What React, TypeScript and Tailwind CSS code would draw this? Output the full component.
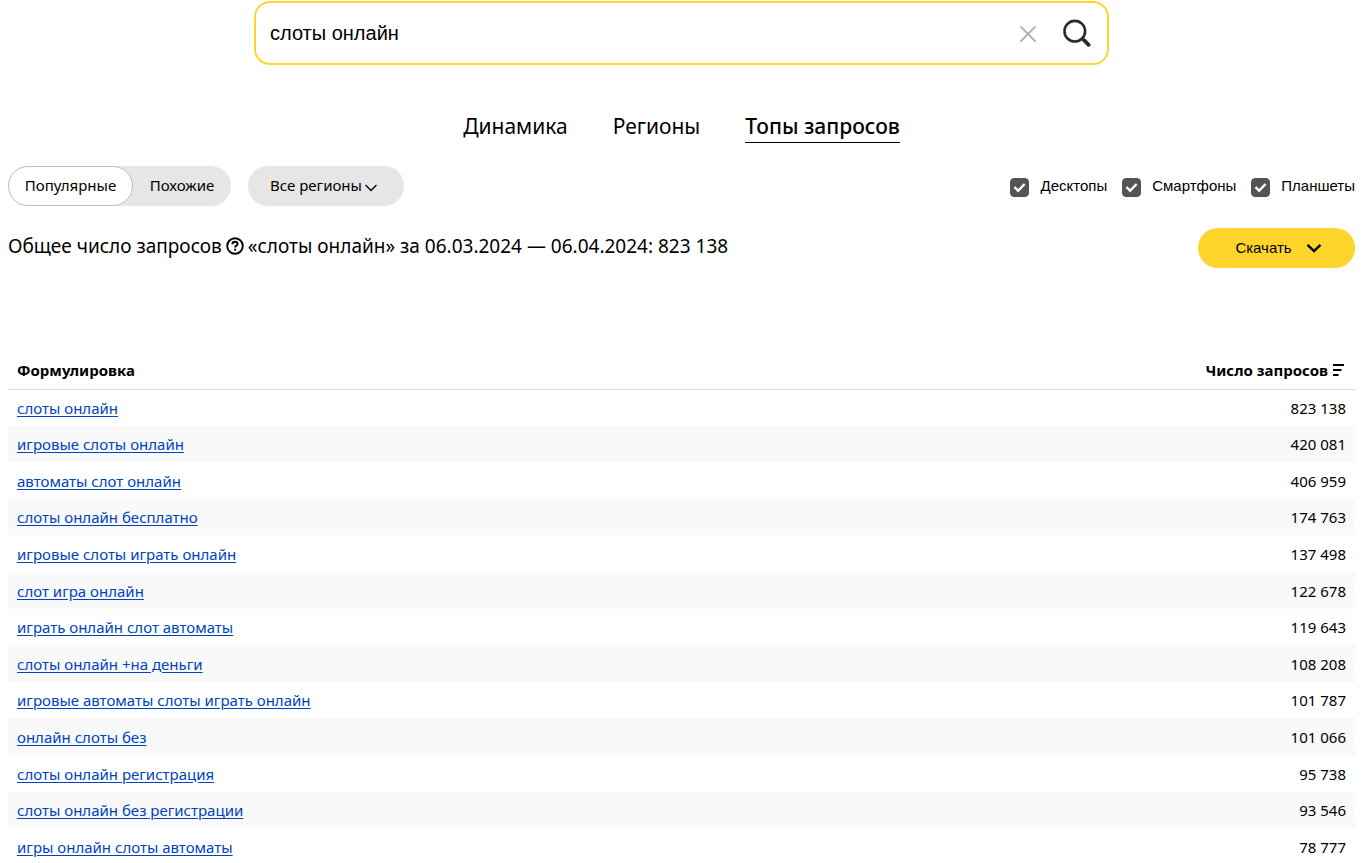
import React, { useState } from 'react';

interface QueryRow {
  phrase: string;
  count: string;
}

const rows: QueryRow[] = [
  { phrase: 'слоты онлайн', count: '823 138' },
  { phrase: 'игровые слоты онлайн', count: '420 081' },
  { phrase: 'автоматы слот онлайн', count: '406 959' },
  { phrase: 'слоты онлайн бесплатно', count: '174 763' },
  { phrase: 'игровые слоты играть онлайн', count: '137 498' },
  { phrase: 'слот игра онлайн', count: '122 678' },
  { phrase: 'играть онлайн слот автоматы', count: '119 643' },
  { phrase: 'слоты онлайн +на деньги', count: '108 208' },
  { phrase: 'игровые автоматы слоты играть онлайн', count: '101 787' },
  { phrase: 'онлайн слоты без', count: '101 066' },
  { phrase: 'слоты онлайн регистрация', count: '95 738' },
  { phrase: 'слоты онлайн без регистрации', count: '93 546' },
  { phrase: 'игры онлайн слоты автоматы', count: '78 777' },
];

const SearchBar: React.FC = () => {
  const [query, setQuery] = useState('слоты онлайн');

  return (
    <form
      onSubmit={(e) => e.preventDefault()}
      className="mx-auto flex h-16 w-full max-w-[855px] items-center rounded-2xl border-2 border-[#ffd42b] bg-white pl-3.5 pr-4"
    >
      <input
        type="text"
        aria-label="Запрос"
        value={query}
        onChange={(e) => setQuery(e.target.value)}
        className="min-w-0 flex-1 font-['Liberation_Sans',Arial,sans-serif] text-[20px] leading-6 outline-none"
      />
      <button type="button" aria-label="Очистить" onClick={() => setQuery('')} className="mr-[26px] pt-0.5">
        <svg width="18" height="18" viewBox="0 0 18 18" fill="none" stroke="#b3b3b3" strokeWidth="2">
          <path d="M1.5 1.5l15 15M16.5 1.5l-15 15" />
        </svg>
      </button>
      <button type="submit" aria-label="Найти">
        <svg width="28" height="28" viewBox="0 0 28 28" fill="none" stroke="#2b2b2f">
          <circle cx="11.8" cy="12.2" r="10.3" strokeWidth="2.6" />
          <path d="M18.8 19.2l2.4 2.4" strokeWidth="2.4" />
          <path d="M21 21.2l4.6 4.6" strokeWidth="3.8" strokeLinecap="round" />
        </svg>
      </button>
    </form>
  );
};

const DeviceCheckbox: React.FC<{ label: string }> = ({ label }) => (
  <label className="flex items-center gap-[11px]">
    <span className="grid h-[19px] w-[19px] place-items-center pt-px">
      <input
        type="checkbox"
        defaultChecked
        className="peer col-start-1 row-start-1 h-[19px] w-[19px] appearance-none rounded border border-[#545454] checked:bg-[#545454]"
      />
      <svg
        className="pointer-events-none invisible col-start-1 row-start-1 peer-checked:visible"
        width="13"
        height="11"
        viewBox="0 0 13 11"
        fill="none"
        stroke="#fff"
        strokeWidth="2.4"
      >
        <path d="M1.5 5l3.6 3.8L11.6 2" />
      </svg>
    </span>
    <span>{label}</span>
  </label>
);

export default function App() {
  const [mode, setMode] = useState('popular');

  return (
    <div className="h-screen overflow-hidden bg-white pl-2 pr-[9px] pt-px font-['Noto_Sans',sans-serif] text-black">
      <SearchBar />

      {/* Tabs */}
      <nav className="mt-[46px] flex justify-center gap-[45px] text-[21px] leading-[30px]">
        <a href="#dynamics" className="border-b border-transparent pb-px">Динамика</a>
        <a href="#regions" className="border-b border-transparent pb-px">Регионы</a>
        <a href="#tops" className="border-b border-black pb-px font-medium">Топы запросов</a>
      </nav>

      {/* Filters */}
      <div className="mt-[23px] flex items-center justify-between">
        <div className="flex gap-[17px] text-[15px] leading-5">
          <div className="flex h-10 rounded-full bg-[#e6e6e6]">
            <button
              onClick={() => setMode('popular')}
              className={`w-[125px] rounded-full border pb-0.5 ${mode === 'popular' ? 'border-[#bfbfbf] bg-white' : 'border-transparent'}`}
            >
              Популярные
            </button>
            <button
              onClick={() => setMode('similar')}
              className={`w-[98px] rounded-full border pb-0.5 ${mode === 'similar' ? 'border-[#bfbfbf] bg-white' : 'border-transparent'}`}
            >
              Похожие
            </button>
          </div>
          <button className="flex h-10 w-[156px] items-center justify-center gap-0.5 rounded-full bg-[#e6e6e6] pb-0.5 pr-1">
            Все регионы
            <svg width="14" height="9" viewBox="0 0 14 9" className="mt-1" fill="none" stroke="#000" strokeWidth="1.3">
              <path d="M1.5 2l5.5 5.5L12.5 2" />
            </svg>
          </button>
        </div>
        <div className="flex gap-[15px] font-['Liberation_Sans',Arial,sans-serif] text-[15px] leading-5">
          <DeviceCheckbox label="Десктопы" />
          <DeviceCheckbox label="Смартфоны" />
          <DeviceCheckbox label="Планшеты" />
        </div>
      </div>

      {/* Total and export */}
      <div className="mt-[22px] flex items-start justify-between">
        <p className="flex items-center gap-1 pt-1 text-[19px] leading-7">
          Общее число запросов
          <svg width="18" height="18" viewBox="0 0 18 18" fill="none" stroke="#000" strokeWidth="1.9">
            <circle cx="9" cy="9" r="7.8" />
            <path d="M6.4 7.2c0-1.6 1.1-2.5 2.6-2.5s2.6.9 2.6 2.2c0 1.8-2.5 1.7-2.5 3.7" />
            <path d="M9.1 11.7v2" />
          </svg>
          «слоты онлайн» за 06.03.2024 — 06.04.2024: 823 138
        </p>
        <button className="flex h-10 w-[157px] items-center justify-center gap-3.5 rounded-full bg-[#ffd42b] pl-1 font-['Liberation_Sans',Arial,sans-serif] text-[15px]">
          Скачать
          <svg width="16" height="10" viewBox="0 0 16 10" fill="none" stroke="#000" strokeWidth="2.4">
            <path d="M1.5 1.8L8 8l6.5-6.2" />
          </svg>
        </button>
      </div>

      <table className="mt-[83px] w-full text-[15px] leading-5">
        <thead>
          <tr className="h-[38px] border-b border-[#dcdcdc] font-bold">
            <th className="px-[9px] text-left">Формулировка</th>
            <th className="px-[9px]">
              <div className="flex items-center justify-end gap-1">
                Число запросов
                <svg width="14" height="12" viewBox="0 0 14 12" stroke="#000" strokeWidth="2">
                  <path d="M1 1h11M1 6h8.5M1 11h5.5" />
                </svg>
              </div>
            </th>
          </tr>
        </thead>
        <tbody>
          {rows.map((row) => (
            <tr
              key={row.phrase}
              className="h-[37px] even:bg-[#f9f9f9] nth-[5n+2]:h-9 nth-[5n+4]:h-9"
            >
              <td className="px-[9px]">
                <a href="#query" className="text-[#04b] underline underline-offset-2">{row.phrase}</a>
              </td>
              <td className="px-[9px] text-right">{row.count}</td>
            </tr>
          ))}
        </tbody>
      </table>
    </div>
  );
}
